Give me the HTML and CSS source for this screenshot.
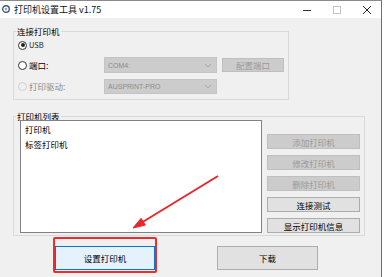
FILE: index.html
```html
<!DOCTYPE html>
<html lang="zh-CN">
<head>
<meta charset="utf-8">
<title>打印机设置工具 v1.75</title>
<link rel="stylesheet" href="styles.css">
</head>
<body>
<div class="window">
  <div class="titlebar">
    <svg class="app-icon" width="8" height="8" viewBox="0 0 8 8"><circle cx="4" cy="4" r="3.3" fill="none" stroke="#3f5a78" stroke-width="1.4"/><circle cx="4" cy="4" r="1.2" fill="#7fa6c9"/></svg>
    <span class="title">打印机设置工具 v1.75</span>
    <div class="controls">
      <svg class="ctl" width="10" height="10" viewBox="0 0 10 10"><path d="M1 5.5H9" stroke="#333" stroke-width="1"/></svg>
      <svg class="ctl" width="10" height="10" viewBox="0 0 10 10"><rect x="1.5" y="1.5" width="7" height="7" fill="none" stroke="#c4c4c4" stroke-width="1"/></svg>
      <svg class="ctl" width="10" height="10" viewBox="0 0 10 10"><path d="M1 1L9 9M9 1L1 9" stroke="#222" stroke-width="1"/></svg>
    </div>
  </div>
  <div class="client">
    <fieldset class="group group-connect">
      <legend>连接打印机</legend>
      <div class="row row-usb">
        <span class="radio checked"></span><span class="lbl lbl-small">USB</span>
      </div>
      <div class="row row-port">
        <span class="radio"></span><span class="lbl">端口:</span>
        <div class="combo"><span>COM4:</span><svg width="8" height="5" viewBox="0 0 8 5"><path d="M1 1L4 4L7 1" fill="none" stroke="#a8a8a8"/></svg></div>
        <div class="btn btn-disabled btn-port">配置端口</div>
      </div>
      <div class="row row-driver">
        <span class="radio disabled"></span><span class="lbl lbl-disabled">打印驱动:</span>
        <div class="combo"><span>AUSPRINT-PRO</span><svg width="8" height="5" viewBox="0 0 8 5"><path d="M1 1L4 4L7 1" fill="none" stroke="#a8a8a8"/></svg></div>
      </div>
    </fieldset>
    <fieldset class="group group-list">
      <legend>打印机列表</legend>
      <div class="list-body">
        <div class="listbox">
          <div class="item">打印机</div>
          <div class="item">标签打印机</div>
        </div>
        <div class="side-buttons">
          <div class="btn btn-disabled">添加打印机</div>
          <div class="btn btn-disabled">修改打印机</div>
          <div class="btn btn-disabled">删除打印机</div>
          <div class="btn">连接测试</div>
          <div class="btn">显示打印机信息</div>
        </div>
      </div>
    </fieldset>
    <div class="bottom-row">
      <div class="btn btn-big btn-default">设置打印机</div>
      <div class="btn btn-big btn-download">下载</div>
    </div>
  </div>
  <div class="highlight"></div>
  <svg class="arrow" width="385" height="277" viewBox="0 0 385 277">
    <path d="M218 176L141 223" stroke="#e8262b" stroke-width="2" fill="none"/>
    <path d="M133 228L145.3 225.1L141.1 218.3Z" fill="#e8262b" stroke="#e8262b" stroke-width="1"/>
  </svg>
</div>
</body>
</html>
```

FILE: styles.css
```css
* { box-sizing: border-box; }
html, body { margin: 0; padding: 0; }
body {
  background: #ffffff;
  font-family: "Noto Sans CJK SC", "Noto Sans", sans-serif;
  font-size: 8.5px;
  color: #000;
  width: 385px;
  height: 277px;
  overflow: hidden;
}
.window {
  position: relative;
  width: 382px;
  height: 277px;
  border-right: 1px solid #6f6f6f;
  border-top: 1px solid #8a8a8a;
  display: flex;
  flex-direction: column;
}
.titlebar {
  height: 17px;
  background: #fff;
  display: flex;
  align-items: center;
  padding-left: 2px;
}
.app-icon { margin-top: -1px; }
.title {
  margin-left: 4px;
  font-size: 9px;
  line-height: 12px;
  color: #111;
}
.controls {
  margin-left: auto;
  display: flex;
  align-items: center;
  gap: 20px;
  padding-right: 9px;
}
.client {
  flex: 1;
  background: #f0f0f0;
  padding: 7px 0 0 13px;
}
.group {
  margin: 0;
  padding: 0 0 0 4px;
  border: 1px solid #d9d9d9;
  min-inline-size: 0;
}
.group legend {
  padding: 0 1px;
  margin-left: -2px;
  line-height: 12px;
  font-size: 8.5px;
}
.group-connect {
  width: 276px;
  padding-bottom: 5px;
}
.row {
  display: flex;
  align-items: center;
  height: 16px;
}
.row-usb { height: 14px; margin-top: 1px; }
.row-port, .row-driver { margin-top: 5px; }
.radio {
  width: 9px;
  height: 9px;
  border-radius: 50%;
  border: 1px solid #333;
  background: #fff;
  position: relative;
  flex: none;
}
.radio.checked::after {
  content: "";
  position: absolute;
  left: 1.5px;
  top: 1.5px;
  width: 4px;
  height: 4px;
  border-radius: 50%;
  background: #222;
}
.radio.disabled { border-color: #cfcfcf; background: #f0f0f0; }
.lbl { margin-left: 2px; width: 75px; line-height: 12px; }
.lbl-small { font-size: 7.5px; color: #222; }
.lbl-disabled { color: #8a8a8a; }
.combo {
  width: 113px;
  height: 16px;
  background: #cccccc;
  border: 1px solid #c4c4c4;
  display: flex;
  align-items: center;
  justify-content: space-between;
  padding: 0 4px 0 3px;
  color: #8b8b8b;
  font-size: 7px;
  font-family: "Liberation Sans", "Noto Sans", sans-serif;
}
.row-driver .combo { height: 15px; }
.btn {
  height: 15px;
  background: #e1e1e1;
  border: 1px solid #adadad;
  display: flex;
  align-items: center;
  justify-content: center;
  line-height: 12px;
  font-size: 8.5px;
  color: #000;
}
.btn-disabled {
  background: #cccccc;
  border-color: #bfbfbf;
  color: #9a9a9a;
}
.btn-port {
  width: 62px;
  height: 14px;
  margin-left: 5px;
}
.group-list {
  width: 352px;
  margin-top: 11px;
  padding: 0 4px 2px 6px;
}
.group-list legend {
  line-height: 10px;
  margin-left: -4px;
}
.list-body {
  display: flex;
  gap: 5px;
  margin-top: -1px;
}
.listbox {
  width: 242px;
  height: 113px;
  background: #fff;
  border: 1px solid #828282;
  padding: 1px 0 0 4px;
}
.item { line-height: 15px; font-size: 8.5px; }
.side-buttons {
  width: 93px;
  display: flex;
  flex-direction: column;
  gap: 6px;
  margin-top: 14px;
}
.bottom-row {
  display: flex;
  gap: 62px;
  margin-top: 10px;
  padding-left: 42px;
}
.btn-big { height: 24px; }
.btn-default {
  width: 100px;
  background: #e5f1fb;
  border-color: #0078d7;
}
.btn-download { width: 101px; }
.highlight {
  position: absolute;
  left: 53px;
  top: 236px;
  width: 104px;
  height: 36px;
  border: 2px solid #e5302f;
  border-radius: 2px;
}
.arrow {
  position: absolute;
  left: 0;
  top: -1px;
}
```
